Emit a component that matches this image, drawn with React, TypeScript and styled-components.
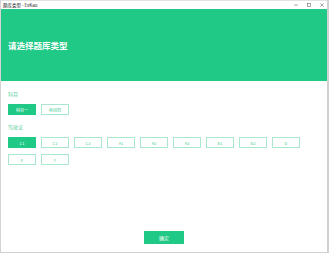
import styled, { createGlobalStyle } from 'styled-components'

const GlobalStyle = createGlobalStyle`
  html, body {
    margin: 0;
    padding: 0;
    background: #ffffff;
  }
  body {
    font-family: "Noto Sans CJK SC", "Noto Sans", sans-serif;
  }
`

const brand = '#20c985'

const StyledWindow = styled.div`
  width: 329px;
  height: 253px;
  box-sizing: border-box;
  display: flex;
  flex-direction: column;
  background: #ffffff;
  border-left: 1px solid #d4d4d4;
  border-right: 2px solid #d2d2d2;
  border-bottom: 1px solid #cfcfcf;
  overflow: hidden;
`

const StyledTitleBar = styled.div`
  height: 9px;
  flex: none;
  display: flex;
  align-items: center;
  justify-content: space-between;
  padding: 0 0 0 2px;
  border-top: 1px solid #e2e2e2;
  box-sizing: border-box;
  font-size: 4.5px;
  color: #222222;
`

const StyledControls = styled.div`
  display: flex;
  align-items: center;
  gap: 9px;
  padding-right: 3px;
  color: #6b6b6b;
`

const StyledBanner = styled.header`
  height: 72px;
  flex: none;
  display: flex;
  align-items: center;
  padding-left: 7px;
  background: ${brand};
`

const StyledHeading = styled.h1`
  margin: 0;
  font-size: 8.5px;
  font-weight: 700;
  color: #ffffff;
`

const StyledContent = styled.main`
  flex: 1;
  padding: 10px 7px 0 7px;
`

const StyledLabel = styled.div<{ $first?: boolean }>`
  font-size: 5px;
  line-height: 6px;
  color: #5fd29f;
  margin-top: ${(p) => (p.$first ? 0 : 9)}px;
  margin-bottom: 7px;
`

const StyledOptions = styled.div`
  display: flex;
  flex-wrap: wrap;
  gap: 6px 5px;
`

const StyledOption = styled.button<{ $active?: boolean }>`
  width: 28px;
  height: 11px;
  padding: 0;
  box-sizing: border-box;
  display: flex;
  align-items: center;
  justify-content: center;
  font-family: inherit;
  font-size: 4px;
  border: 1px solid ${(p) => (p.$active ? brand : '#a9e8cd')};
  background: ${(p) => (p.$active ? brand : '#ffffff')};
  color: ${(p) => (p.$active ? '#ffffff' : '#3fcb8e')};
  cursor: pointer;
`

const StyledFooter = styled.footer`
  flex: none;
  display: flex;
  justify-content: center;
  padding-bottom: 8px;
`

const StyledConfirm = styled.button`
  width: 40px;
  height: 13px;
  padding: 0;
  border: none;
  background: ${brand};
  color: #ffffff;
  font-family: inherit;
  font-size: 5px;
  cursor: pointer;
`

const subjects = ['科目一', '科目四']
const licences = ['C1', 'C2', 'C3', 'A1', 'A2', 'A3', 'B1', 'B2', 'D', 'E', 'F']

export default function App() {
  return (
    <>
      <GlobalStyle />
      <StyledWindow>
        <StyledTitleBar>
          <span>题库类型 - ExKao</span>
          <StyledControls>
            <svg width="4" height="4" viewBox="0 0 4 4">
              <line x1="0" y1="2" x2="4" y2="2" stroke="currentColor" strokeWidth="0.6" />
            </svg>
            <svg width="4" height="4" viewBox="0 0 4 4">
              <rect x="0.4" y="0.4" width="3.2" height="3.2" fill="none" stroke="currentColor" strokeWidth="0.6" />
            </svg>
            <svg width="4" height="4" viewBox="0 0 4 4">
              <path d="M0.3 0.3 L3.7 3.7 M3.7 0.3 L0.3 3.7" stroke="currentColor" strokeWidth="0.6" />
            </svg>
          </StyledControls>
        </StyledTitleBar>
        <StyledBanner>
          <StyledHeading>请选择题库类型</StyledHeading>
        </StyledBanner>
        <StyledContent>
          <StyledLabel $first>科目</StyledLabel>
          <StyledOptions>
            {subjects.map((s, i) => (
              <StyledOption key={s} $active={i === 0}>
                {s}
              </StyledOption>
            ))}
          </StyledOptions>
          <StyledLabel>驾驶证</StyledLabel>
          <StyledOptions>
            {licences.map((l, i) => (
              <StyledOption key={l} $active={i === 0}>
                {l}
              </StyledOption>
            ))}
          </StyledOptions>
        </StyledContent>
        <StyledFooter>
          <StyledConfirm>确定</StyledConfirm>
        </StyledFooter>
      </StyledWindow>
    </>
  )
}
